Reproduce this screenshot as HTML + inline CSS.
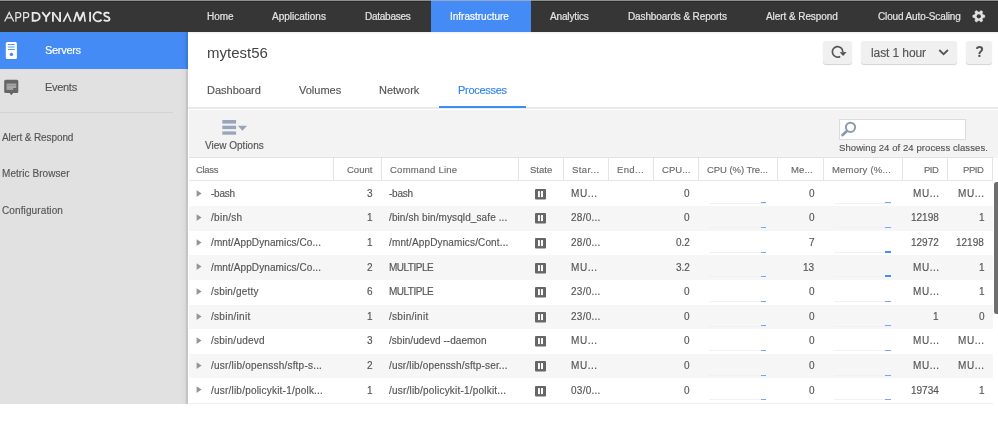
<!DOCTYPE html>
<html><head><meta charset="utf-8">
<style>
*{box-sizing:border-box;margin:0;padding:0}
html,body{width:998px;height:433px;overflow:hidden;background:#fff;font-family:"Liberation Sans",sans-serif;position:relative}
.a{position:absolute;white-space:nowrap;line-height:1;will-change:transform;-webkit-text-stroke:0.15px currentColor}
.b{position:absolute}
.nav{top:12px;font-size:10px;color:#e3e3e3;-webkit-text-stroke:0.2px currentColor}
.sl{font-size:10px;color:#555}
.tab{top:84.6px;font-size:11px;color:#555}
.hd{font-size:10px;color:#666;top:166px}
.cell{font-size:10px;color:#4a4a4a}
.r{text-align:right}
.vl{position:absolute;top:157.5px;width:1px;height:22.8px;background:#e4e4e4}
</style></head><body>

<div class="b" style="left:0;top:0;width:998px;height:32px;background:#363636"></div>
<div class="b" style="left:0;top:0;width:998px;height:1px;background:#8f8f8f"></div>
<div class="b" style="left:0;top:1px;width:998px;height:1px;background:#2a2a2a"></div>
<div class="b" style="left:188px;top:32px;width:810px;height:2px;background:linear-gradient(to bottom,rgba(0,0,0,0.07),rgba(0,0,0,0))"></div>
<div class="b" style="left:431px;top:1px;width:100px;height:31px;background:#448bf5"></div>
<div class="b" style="left:431px;top:0;width:100px;height:1px;background:#93a7c8"></div>
<svg class="b" style="left:0;top:0" width="120" height="32" fill="none" stroke="#e2e2e2"><g stroke-width="1.25" stroke-linejoin="miter"><path d="M4.6,21.5 L9.2,12.5 L13.7,21.5 M6.6,17.8 H11.9"/><path d="M15.9,21.7 V12.5 H18.2 A2.6,2.6 0 0 1 18.2,17.7 H15.9"/><path d="M23.7,21.7 V12.5 H26.1 A2.6,2.6 0 0 1 26.1,17.7 H23.7"/></g><g stroke-width="1.85" stroke="#e8e8e8"><path d="M32.65,12.85 H35.4 A4.3,3.95 0 0 1 35.4,20.75 H32.65 Z"/><path d="M42.2,12.2 L46.2,17.2 L50.2,12.2 M46.2,17.2 V21.75"/><path d="M52.95,21.75 V11.9 M60.05,21.75 V11.9" /><polygon points="52.0,11.9 53.9,11.9 61.0,21.75 59.1,21.75" fill="#e8e8e8" stroke="none"/><polygon points="62.5,21.75 67.6,11.8 71.9,21.75 70.1,21.75 67.6,15.6 64.4,21.75" fill="#e8e8e8" stroke="none"/><polygon points="73.0,21.75 76.0,11.8 77.6,11.8 79.9,18.0 82.6,11.8 84.4,11.8 86.0,21.75 84.3,21.75 83.5,15.0 80.8,21.3 79.0,21.3 76.9,15.0 74.8,21.75" fill="#e8e8e8" stroke="none"/><path d="M90.1,11.9 V21.75"/><path d="M101.6,13.9 A4.6,4.6 0 1 0 101.6,19.7"/><path d="M109.2,13.6 C108.2,12.3 104.1,12.2 104.1,14.6 C104.1,17.0 109.5,16.2 109.5,18.9 C109.5,21.4 105.1,21.3 103.8,19.8"/></g></svg>
<div class="a nav" style="left:206.5px;color:#e3e3e3;letter-spacing:0px">Home</div>
<div class="a nav" style="left:272px;color:#e3e3e3;letter-spacing:0px">Applications</div>
<div class="a nav" style="left:365.4px;color:#e3e3e3;letter-spacing:-0.25px">Databases</div>
<div class="a nav" style="left:450.4px;color:#fff;letter-spacing:0px">Infrastructure</div>
<div class="a nav" style="left:550px;color:#e3e3e3;letter-spacing:-0.15px">Analytics</div>
<div class="a nav" style="left:628px;color:#e3e3e3;letter-spacing:-0.12px">Dashboards &amp; Reports</div>
<div class="a nav" style="left:766px;color:#e3e3e3;letter-spacing:-0.07px">Alert &amp; Respond</div>
<div class="a nav" style="left:877.6px;color:#e3e3e3;letter-spacing:-0.13px">Cloud Auto-Scaling</div>
<svg class="b" style="left:966px;top:4px" width="26" height="26"><polygon points="18.82,11.35 18.82,13.25 16.73,14.05 16.28,14.83 16.64,17.04 14.99,17.99 13.25,16.58 12.35,16.58 10.61,17.99 8.96,17.04 9.32,14.83 8.87,14.05 6.78,13.25 6.78,11.35 8.87,10.55 9.32,9.77 8.96,7.56 10.61,6.61 12.35,8.02 13.25,8.02 14.99,6.61 16.64,7.56 16.28,9.77 16.73,10.55" fill="#e0e0e0" stroke="#e0e0e0" stroke-width="0.5" stroke-linejoin="round"/><circle cx="12.799999999999955" cy="12.3" r="2.1" fill="#363636"/></svg>
<div class="b" style="left:0;top:32px;width:188px;height:372px;background:#e1e1e1"></div>
<div class="b" style="left:0;top:32px;width:188px;height:36.5px;background:#448bf5"></div>
<div class="b" style="left:180px;top:32px;width:8px;height:372px;background:linear-gradient(to right,rgba(0,0,0,0) 0%,rgba(0,0,0,0.025) 60%,rgba(0,0,0,0.06) 72%,rgba(0,0,0,0.12) 77%,rgba(0,0,0,0.13) 97%,rgba(0,0,0,0) 100%)"></div>
<svg class="b" style="left:0;top:38px" width="24" height="24"><rect x="5.8" y="3.9" width="11.1" height="17.2" rx="1.6" fill="#fff"/><rect x="8" y="6" width="6.7" height="0.9" fill="#448bf5"/><rect x="8" y="8.2" width="6.7" height="1.5" fill="#448bf5" opacity="0.6"/><rect x="8" y="11" width="6.7" height="0.9" fill="#448bf5"/><circle cx="11.4" cy="16.4" r="1.7" fill="#448bf5"/></svg>
<div class="a" style="left:45px;top:45px;font-size:11px;color:#fff;letter-spacing:-0.3px">Servers</div>
<svg class="b" style="left:0;top:74px" width="24" height="24"><rect x="4.2" y="5.7" width="14.1" height="13.2" rx="1.5" fill="#666"/><polygon points="9.3,18.8 13.3,18.8 11.3,21.3" fill="#666"/><rect x="6.6" y="9.6" width="9.6" height="4.5" fill="#a8a8a8"/><rect x="6.6" y="11.2" width="9.6" height="0.7" fill="#8a8a8a"/><rect x="13.2" y="14.1" width="3" height="1.8" fill="#666"/><rect x="6.6" y="14.1" width="6.6" height="1.8" fill="#a8a8a8"/></svg>
<div class="a" style="left:45px;top:81.5px;font-size:11px;color:#555;letter-spacing:-0.3px">Events</div>
<div class="b" style="left:0;top:112px;width:173px;height:1px;background:#d3d3d3"></div>
<div class="a" style="left:1.8px;top:133.00px;font-size:10px;color:#555;letter-spacing:-0.100px">Alert &amp; Respond</div>
<div class="a" style="left:2px;top:169.00px;font-size:10px;color:#555;letter-spacing:0.062px">Metric Browser</div>
<div class="a" style="left:2px;top:206.00px;font-size:10px;color:#555;letter-spacing:0.117px">Configuration</div>
<div class="a" style="left:206.5px;top:45px;font-size:15px;color:#444;-webkit-text-stroke:0">mytest56</div>
<div class="b" style="left:823.4px;top:40.5px;width:29.100000000000023px;height:23.5px;background:#f0f0f0;border-radius:3px;box-shadow:0 1px 1px rgba(0,0,0,0.18)"></div>
<div class="b" style="left:861.2px;top:40.5px;width:96.0px;height:23.5px;background:#f0f0f0;border-radius:3px;box-shadow:0 1px 1px rgba(0,0,0,0.18)"></div>
<div class="b" style="left:966px;top:40.5px;width:26px;height:23.5px;background:#f0f0f0;border-radius:3px;box-shadow:0 1px 1px rgba(0,0,0,0.18)"></div>
<svg class="b" style="left:822px;top:38px" width="34" height="30"><path d="M 18.2 18.4 A 5.25 5.25 0 1 1 20.83 14.0" fill="none" stroke="#555" stroke-width="1.7"/><polygon points="17.6,14.3 24.6,13.9 21.1,17.9" fill="#555"/></svg>
<div class="a" style="left:870.6px;top:47px;font-size:12px;color:#555;letter-spacing:-0.1px">last 1 hour</div>
<svg class="b" style="left:936px;top:47px" width="16" height="10"><polyline points="3.3,3.0 7.6,7.2 11.9,3.0" fill="none" stroke="#555" stroke-width="1.8"/></svg>
<svg class="b" style="left:970px;top:41.4px" width="20" height="20"><path d="M6.9,7.9 C7.1,5.6 12.1,5.2 12.1,8.3 C12.1,10.6 9.4,10.5 9.4,12.9" fill="none" stroke="#555" stroke-width="2"/><rect x="8.35" y="13.8" width="2.1" height="2.1" fill="#555"/></svg>
<div class="a tab" style="left:206.5px">Dashboard</div>
<div class="a tab" style="left:298.5px">Volumes</div>
<div class="a tab" style="left:378.5px">Network</div>
<div class="a tab" style="left:458.3px;color:#2f80f0;letter-spacing:-0.3px">Processes</div>
<div class="b" style="left:188px;top:107px;width:810px;height:1.5px;background:#eaeaea"></div>
<div class="b" style="left:439px;top:106px;width:87px;height:2px;background:#3890f7"></div>
<div class="b" style="left:189px;top:109.5px;width:809px;height:48px;background:#f3f3f3"></div>
<svg class="b" style="left:216px;top:114px" width="36" height="26"><rect x="6.3" y="6" width="13.8" height="3.6" fill="#9aa5ba"/><rect x="6.3" y="11.7" width="13.8" height="3.4" fill="#9aa5ba"/><rect x="6.3" y="17.4" width="13.8" height="3.3" fill="#9aa5ba"/><polygon points="21.9,11.7 31.1,11.7 26.4,16.8" fill="#9aa5ba"/></svg>
<div class="a" style="left:205px;top:141px;font-size:10px;color:#555">View Options</div>
<div class="b" style="left:838.7px;top:119.2px;width:127.2px;height:20.4px;background:#fff;border:1px solid #dcdcdc"></div>
<svg class="b" style="left:836px;top:118px" width="24" height="22"><circle cx="14.5" cy="9.3" r="4.6" fill="none" stroke="#8e9ab0" stroke-width="2"/><line x1="10.4" y1="13.4" x2="6.6" y2="17.1" stroke="#8e9ab0" stroke-width="2.8" stroke-linecap="round"/></svg>
<div class="a" style="left:838.9px;top:142.80px;font-size:9.5px;color:#555;letter-spacing:0.081px">Showing 24 of 24 process classes.</div>
<div class="b" style="left:189px;top:157px;width:804px;height:1px;background:#e3e3e3"></div>
<div class="b" style="left:189px;top:180.1px;width:804px;height:1.2px;background:#e6e6e6"></div>
<div class="vl" style="left:333.0px"></div>
<div class="vl" style="left:381.0px"></div>
<div class="vl" style="left:517.5px"></div>
<div class="vl" style="left:563.0px"></div>
<div class="vl" style="left:608.0px"></div>
<div class="vl" style="left:653.0px"></div>
<div class="vl" style="left:698.0px"></div>
<div class="vl" style="left:777.0px"></div>
<div class="vl" style="left:822.5px"></div>
<div class="vl" style="left:902.0px"></div>
<div class="vl" style="left:947.0px"></div>
<div class="vl" style="left:992.0px"></div>
<div class="a" style="left:196.4px;top:165.30px;font-size:9.5px;color:#6a6a6a;letter-spacing:-0.325px">Class</div>
<div class="a" style="right:625.40px;top:165.30px;font-size:9.5px;color:#6a6a6a;letter-spacing:0.000px">Count</div>
<div class="a" style="left:390px;top:165.30px;font-size:9.5px;color:#6a6a6a;letter-spacing:0.245px">Command Line</div>
<div class="a" style="left:529.5px;top:165.30px;font-size:9.5px;color:#6a6a6a;letter-spacing:0.000px">State</div>
<div class="a" style="left:571.5px;top:165.30px;font-size:9.5px;color:#6a6a6a;letter-spacing:0.383px">Star...</div>
<div class="a" style="left:616.6px;top:165.30px;font-size:9.5px;color:#6a6a6a;letter-spacing:0.340px">End...</div>
<div class="a" style="left:662px;top:165.30px;font-size:9.5px;color:#6a6a6a;letter-spacing:0.080px">CPU...</div>
<div class="a" style="left:707.1px;top:165.30px;font-size:9.5px;color:#6a6a6a;letter-spacing:-0.069px">CPU (%) Tre...</div>
<div class="a" style="right:184.90px;top:165.30px;font-size:9.5px;color:#6a6a6a;letter-spacing:0.100px">Me...</div>
<div class="a" style="left:831.7px;top:165.30px;font-size:9.5px;color:#6a6a6a;letter-spacing:0.209px">Memory (%...</div>
<div class="a" style="right:59.50px;top:165.30px;font-size:9.5px;color:#6a6a6a;letter-spacing:-0.500px">PID</div>
<div class="a" style="right:14.10px;top:165.30px;font-size:9.5px;color:#6a6a6a;letter-spacing:-0.400px">PPID</div>
<svg class="b" style="left:196px;top:189.50px" width="7" height="8"><polygon points="0.6,0.3 5.6,3.6 0.6,6.9" fill="#959595"/></svg>
<div class="a" style="left:211.4px;top:188.80px;font-size:10px;color:#555;letter-spacing:-0.250px">-bash</div>
<div class="a" style="right:625.40px;top:188.80px;font-size:10px;color:#555;letter-spacing:0.000px">3</div>
<div class="a" style="left:389.2px;top:188.80px;font-size:10px;color:#555;letter-spacing:-0.250px">-bash</div>
<svg class="b" style="left:534.9px;top:188.80px" width="11.5" height="11"><rect x="0" y="0" width="11.1" height="10.4" rx="1" fill="#666"/><rect x="3.0" y="2.1" width="1.9" height="6" fill="#fff"/><rect x="6.0" y="2.1" width="2.0" height="6" fill="#fff"/></svg>
<div class="a" style="left:570.5px;top:188.80px;font-size:10px;color:#555;letter-spacing:0.550px">MU...</div>
<div class="a" style="right:308.00px;top:188.80px;font-size:10px;color:#555;letter-spacing:0.000px">0</div>
<div class="a" style="right:183.40px;top:188.80px;font-size:10px;color:#555;letter-spacing:0.000px">0</div>
<div class="a" style="right:58.65px;top:188.80px;font-size:10px;color:#555;letter-spacing:0.550px">MU...</div>
<div class="a" style="right:13.25px;top:188.80px;font-size:10px;color:#555;letter-spacing:0.550px">MU...</div>
<div class="b" style="left:709px;top:202.50px;width:57px;height:1px;background:#eef1f6"></div>
<div class="b" style="left:760.8px;top:202.40px;width:5.2px;height:1.1px;background:#77a6f2"></div>
<div class="b" style="left:834px;top:202.50px;width:56.799999999999955px;height:1px;background:#eef1f6"></div>
<div class="b" style="left:885.3px;top:202.40px;width:5.5px;height:1.1px;background:#77a6f2"></div>
<div class="b" style="left:189px;top:206.10px;width:804px;height:24.6px;background:#f6f6f6"></div>
<svg class="b" style="left:196px;top:214.10px" width="7" height="8"><polygon points="0.6,0.3 5.6,3.6 0.6,6.9" fill="#959595"/></svg>
<div class="a" style="left:211.4px;top:213.40px;font-size:10px;color:#555;letter-spacing:0.283px">/bin/sh</div>
<div class="a" style="right:625.40px;top:213.40px;font-size:10px;color:#555;letter-spacing:0.000px">1</div>
<div class="a" style="left:389.2px;top:213.40px;font-size:10px;color:#555;letter-spacing:0.100px">/bin/sh bin/mysqld_safe ...</div>
<svg class="b" style="left:534.9px;top:213.40px" width="11.5" height="11"><rect x="0" y="0" width="11.1" height="10.4" rx="1" fill="#666"/><rect x="3.0" y="2.1" width="1.9" height="6" fill="#fff"/><rect x="6.0" y="2.1" width="2.0" height="6" fill="#fff"/></svg>
<div class="a" style="left:570.5px;top:213.40px;font-size:10px;color:#555;letter-spacing:0.267px">28/0...</div>
<div class="a" style="right:308.00px;top:213.40px;font-size:10px;color:#555;letter-spacing:0.000px">0</div>
<div class="a" style="right:183.40px;top:213.40px;font-size:10px;color:#555;letter-spacing:0.000px">0</div>
<div class="a" style="right:59.20px;top:213.40px;font-size:10px;color:#555;letter-spacing:0.000px">12198</div>
<div class="a" style="right:13.80px;top:213.40px;font-size:10px;color:#555;letter-spacing:0.000px">1</div>
<div class="b" style="left:709px;top:227.10px;width:57px;height:1px;background:#eef1f6"></div>
<div class="b" style="left:760.8px;top:227.00px;width:5.2px;height:1.1px;background:#77a6f2"></div>
<div class="b" style="left:834px;top:227.10px;width:56.799999999999955px;height:1px;background:#eef1f6"></div>
<div class="b" style="left:885.3px;top:227.00px;width:5.5px;height:1.1px;background:#77a6f2"></div>
<svg class="b" style="left:196px;top:238.70px" width="7" height="8"><polygon points="0.6,0.3 5.6,3.6 0.6,6.9" fill="#959595"/></svg>
<div class="a" style="left:211.4px;top:238.00px;font-size:10px;color:#555;letter-spacing:0.105px">/mnt/AppDynamics/Co...</div>
<div class="a" style="right:625.40px;top:238.00px;font-size:10px;color:#555;letter-spacing:0.000px">1</div>
<div class="a" style="left:389.2px;top:238.00px;font-size:10px;color:#555;letter-spacing:0.139px">/mnt/AppDynamics/Cont...</div>
<svg class="b" style="left:534.9px;top:238.00px" width="11.5" height="11"><rect x="0" y="0" width="11.1" height="10.4" rx="1" fill="#666"/><rect x="3.0" y="2.1" width="1.9" height="6" fill="#fff"/><rect x="6.0" y="2.1" width="2.0" height="6" fill="#fff"/></svg>
<div class="a" style="left:570.5px;top:238.00px;font-size:10px;color:#555;letter-spacing:0.267px">28/0...</div>
<div class="a" style="right:308.00px;top:238.00px;font-size:10px;color:#555;letter-spacing:0.000px">0.2</div>
<div class="a" style="right:183.40px;top:238.00px;font-size:10px;color:#555;letter-spacing:0.000px">7</div>
<div class="a" style="right:59.20px;top:238.00px;font-size:10px;color:#555;letter-spacing:0.000px">12972</div>
<div class="a" style="right:13.80px;top:238.00px;font-size:10px;color:#555;letter-spacing:0.000px">12198</div>
<div class="b" style="left:709px;top:251.70px;width:57px;height:1px;background:#eef1f6"></div>
<div class="b" style="left:760.8px;top:251.60px;width:5.2px;height:1.1px;background:#77a6f2"></div>
<div class="b" style="left:834px;top:251.70px;width:56.799999999999955px;height:1px;background:#eef1f6"></div>
<div class="b" style="left:885.3px;top:250.70px;width:5.5px;height:2.0px;background:#4a8df0"></div>
<div class="b" style="left:189px;top:255.30px;width:804px;height:24.6px;background:#f6f6f6"></div>
<svg class="b" style="left:196px;top:263.30px" width="7" height="8"><polygon points="0.6,0.3 5.6,3.6 0.6,6.9" fill="#959595"/></svg>
<div class="a" style="left:211.4px;top:262.60px;font-size:10px;color:#555;letter-spacing:0.105px">/mnt/AppDynamics/Co...</div>
<div class="a" style="right:625.40px;top:262.60px;font-size:10px;color:#555;letter-spacing:0.000px">2</div>
<div class="a" style="left:389.2px;top:262.60px;font-size:10px;color:#555;letter-spacing:-0.500px">MULTIPLE</div>
<svg class="b" style="left:534.9px;top:262.60px" width="11.5" height="11"><rect x="0" y="0" width="11.1" height="10.4" rx="1" fill="#666"/><rect x="3.0" y="2.1" width="1.9" height="6" fill="#fff"/><rect x="6.0" y="2.1" width="2.0" height="6" fill="#fff"/></svg>
<div class="a" style="left:570.5px;top:262.60px;font-size:10px;color:#555;letter-spacing:0.550px">MU...</div>
<div class="a" style="right:308.00px;top:262.60px;font-size:10px;color:#555;letter-spacing:0.000px">3.2</div>
<div class="a" style="right:183.40px;top:262.60px;font-size:10px;color:#555;letter-spacing:0.000px">13</div>
<div class="a" style="right:58.65px;top:262.60px;font-size:10px;color:#555;letter-spacing:0.550px">MU...</div>
<div class="a" style="right:13.80px;top:262.60px;font-size:10px;color:#555;letter-spacing:0.000px">1</div>
<div class="b" style="left:709px;top:276.30px;width:57px;height:1px;background:#eef1f6"></div>
<div class="b" style="left:760.8px;top:276.20px;width:5.2px;height:1.1px;background:#77a6f2"></div>
<div class="b" style="left:834px;top:276.30px;width:56.799999999999955px;height:1px;background:#eef1f6"></div>
<div class="b" style="left:885.3px;top:274.50px;width:5.5px;height:2.8px;background:#4a8df0"></div>
<svg class="b" style="left:196px;top:287.90px" width="7" height="8"><polygon points="0.6,0.3 5.6,3.6 0.6,6.9" fill="#959595"/></svg>
<div class="a" style="left:211.4px;top:287.20px;font-size:10px;color:#555;letter-spacing:0.190px">/sbin/getty</div>
<div class="a" style="right:625.40px;top:287.20px;font-size:10px;color:#555;letter-spacing:0.000px">6</div>
<div class="a" style="left:389.2px;top:287.20px;font-size:10px;color:#555;letter-spacing:-0.500px">MULTIPLE</div>
<svg class="b" style="left:534.9px;top:287.20px" width="11.5" height="11"><rect x="0" y="0" width="11.1" height="10.4" rx="1" fill="#666"/><rect x="3.0" y="2.1" width="1.9" height="6" fill="#fff"/><rect x="6.0" y="2.1" width="2.0" height="6" fill="#fff"/></svg>
<div class="a" style="left:570.5px;top:287.20px;font-size:10px;color:#555;letter-spacing:0.267px">23/0...</div>
<div class="a" style="right:308.00px;top:287.20px;font-size:10px;color:#555;letter-spacing:0.000px">0</div>
<div class="a" style="right:183.40px;top:287.20px;font-size:10px;color:#555;letter-spacing:0.000px">0</div>
<div class="a" style="right:58.65px;top:287.20px;font-size:10px;color:#555;letter-spacing:0.550px">MU...</div>
<div class="a" style="right:13.80px;top:287.20px;font-size:10px;color:#555;letter-spacing:0.000px">1</div>
<div class="b" style="left:709px;top:300.90px;width:57px;height:1px;background:#eef1f6"></div>
<div class="b" style="left:760.8px;top:300.80px;width:5.2px;height:1.1px;background:#77a6f2"></div>
<div class="b" style="left:834px;top:300.90px;width:56.799999999999955px;height:1px;background:#eef1f6"></div>
<div class="b" style="left:885.3px;top:300.80px;width:5.5px;height:1.1px;background:#77a6f2"></div>
<div class="b" style="left:189px;top:304.50px;width:804px;height:24.6px;background:#f6f6f6"></div>
<svg class="b" style="left:196px;top:312.50px" width="7" height="8"><polygon points="0.6,0.3 5.6,3.6 0.6,6.9" fill="#959595"/></svg>
<div class="a" style="left:211.4px;top:311.80px;font-size:10px;color:#555;letter-spacing:0.278px">/sbin/init</div>
<div class="a" style="right:625.40px;top:311.80px;font-size:10px;color:#555;letter-spacing:0.000px">1</div>
<div class="a" style="left:389.2px;top:311.80px;font-size:10px;color:#555;letter-spacing:0.278px">/sbin/init</div>
<svg class="b" style="left:534.9px;top:311.80px" width="11.5" height="11"><rect x="0" y="0" width="11.1" height="10.4" rx="1" fill="#666"/><rect x="3.0" y="2.1" width="1.9" height="6" fill="#fff"/><rect x="6.0" y="2.1" width="2.0" height="6" fill="#fff"/></svg>
<div class="a" style="left:570.5px;top:311.80px;font-size:10px;color:#555;letter-spacing:0.267px">23/0...</div>
<div class="a" style="right:308.00px;top:311.80px;font-size:10px;color:#555;letter-spacing:0.000px">0</div>
<div class="a" style="right:183.40px;top:311.80px;font-size:10px;color:#555;letter-spacing:0.000px">0</div>
<div class="a" style="right:59.20px;top:311.80px;font-size:10px;color:#555;letter-spacing:0.000px">1</div>
<div class="a" style="right:13.80px;top:311.80px;font-size:10px;color:#555;letter-spacing:0.000px">0</div>
<div class="b" style="left:709px;top:325.50px;width:57px;height:1px;background:#eef1f6"></div>
<div class="b" style="left:760.8px;top:325.40px;width:5.2px;height:1.1px;background:#77a6f2"></div>
<div class="b" style="left:834px;top:325.50px;width:56.799999999999955px;height:1px;background:#eef1f6"></div>
<div class="b" style="left:885.3px;top:325.40px;width:5.5px;height:1.1px;background:#77a6f2"></div>
<svg class="b" style="left:196px;top:337.10px" width="7" height="8"><polygon points="0.6,0.3 5.6,3.6 0.6,6.9" fill="#959595"/></svg>
<div class="a" style="left:211.4px;top:336.40px;font-size:10px;color:#555;letter-spacing:0.250px">/sbin/udevd</div>
<div class="a" style="right:625.40px;top:336.40px;font-size:10px;color:#555;letter-spacing:0.000px">3</div>
<div class="a" style="left:389.2px;top:336.40px;font-size:10px;color:#555;letter-spacing:0.042px">/sbin/udevd --daemon</div>
<svg class="b" style="left:534.9px;top:336.40px" width="11.5" height="11"><rect x="0" y="0" width="11.1" height="10.4" rx="1" fill="#666"/><rect x="3.0" y="2.1" width="1.9" height="6" fill="#fff"/><rect x="6.0" y="2.1" width="2.0" height="6" fill="#fff"/></svg>
<div class="a" style="left:570.5px;top:336.40px;font-size:10px;color:#555;letter-spacing:0.550px">MU...</div>
<div class="a" style="right:308.00px;top:336.40px;font-size:10px;color:#555;letter-spacing:0.000px">0</div>
<div class="a" style="right:183.40px;top:336.40px;font-size:10px;color:#555;letter-spacing:0.000px">0</div>
<div class="a" style="right:58.65px;top:336.40px;font-size:10px;color:#555;letter-spacing:0.550px">MU...</div>
<div class="a" style="right:13.25px;top:336.40px;font-size:10px;color:#555;letter-spacing:0.550px">MU...</div>
<div class="b" style="left:709px;top:350.10px;width:57px;height:1px;background:#eef1f6"></div>
<div class="b" style="left:760.8px;top:350.00px;width:5.2px;height:1.1px;background:#77a6f2"></div>
<div class="b" style="left:834px;top:350.10px;width:56.799999999999955px;height:1px;background:#eef1f6"></div>
<div class="b" style="left:885.3px;top:350.00px;width:5.5px;height:1.1px;background:#77a6f2"></div>
<div class="b" style="left:189px;top:353.70px;width:804px;height:24.6px;background:#f6f6f6"></div>
<svg class="b" style="left:196px;top:361.70px" width="7" height="8"><polygon points="0.6,0.3 5.6,3.6 0.6,6.9" fill="#959595"/></svg>
<div class="a" style="left:211.4px;top:361.00px;font-size:10px;color:#555;letter-spacing:0.212px">/usr/lib/openssh/sftp-s...</div>
<div class="a" style="right:625.40px;top:361.00px;font-size:10px;color:#555;letter-spacing:0.000px">2</div>
<div class="a" style="left:389.2px;top:361.00px;font-size:10px;color:#555;letter-spacing:0.170px">/usr/lib/openssh/sftp-ser...</div>
<svg class="b" style="left:534.9px;top:361.00px" width="11.5" height="11"><rect x="0" y="0" width="11.1" height="10.4" rx="1" fill="#666"/><rect x="3.0" y="2.1" width="1.9" height="6" fill="#fff"/><rect x="6.0" y="2.1" width="2.0" height="6" fill="#fff"/></svg>
<div class="a" style="left:570.5px;top:361.00px;font-size:10px;color:#555;letter-spacing:0.550px">MU...</div>
<div class="a" style="right:308.00px;top:361.00px;font-size:10px;color:#555;letter-spacing:0.000px">0</div>
<div class="a" style="right:183.40px;top:361.00px;font-size:10px;color:#555;letter-spacing:0.000px">0</div>
<div class="a" style="right:58.65px;top:361.00px;font-size:10px;color:#555;letter-spacing:0.550px">MU...</div>
<div class="a" style="right:13.25px;top:361.00px;font-size:10px;color:#555;letter-spacing:0.550px">MU...</div>
<div class="b" style="left:709px;top:374.70px;width:57px;height:1px;background:#eef1f6"></div>
<div class="b" style="left:760.8px;top:374.60px;width:5.2px;height:1.1px;background:#77a6f2"></div>
<div class="b" style="left:834px;top:374.70px;width:56.799999999999955px;height:1px;background:#eef1f6"></div>
<div class="b" style="left:885.3px;top:374.60px;width:5.5px;height:1.1px;background:#77a6f2"></div>
<svg class="b" style="left:196px;top:386.30px" width="7" height="8"><polygon points="0.6,0.3 5.6,3.6 0.6,6.9" fill="#959595"/></svg>
<div class="a" style="left:211.4px;top:385.60px;font-size:10px;color:#555;letter-spacing:0.211px">/usr/lib/policykit-1/polk...</div>
<div class="a" style="right:625.40px;top:385.60px;font-size:10px;color:#555;letter-spacing:0.000px">1</div>
<div class="a" style="left:389.2px;top:385.60px;font-size:10px;color:#555;letter-spacing:0.203px">/usr/lib/policykit-1/polkit...</div>
<svg class="b" style="left:534.9px;top:385.60px" width="11.5" height="11"><rect x="0" y="0" width="11.1" height="10.4" rx="1" fill="#666"/><rect x="3.0" y="2.1" width="1.9" height="6" fill="#fff"/><rect x="6.0" y="2.1" width="2.0" height="6" fill="#fff"/></svg>
<div class="a" style="left:570.5px;top:385.60px;font-size:10px;color:#555;letter-spacing:0.267px">03/0...</div>
<div class="a" style="right:308.00px;top:385.60px;font-size:10px;color:#555;letter-spacing:0.000px">0</div>
<div class="a" style="right:183.40px;top:385.60px;font-size:10px;color:#555;letter-spacing:0.000px">0</div>
<div class="a" style="right:59.20px;top:385.60px;font-size:10px;color:#555;letter-spacing:0.000px">19734</div>
<div class="a" style="right:13.80px;top:385.60px;font-size:10px;color:#555;letter-spacing:0.000px">1</div>
<div class="b" style="left:709px;top:399.30px;width:57px;height:1px;background:#eef1f6"></div>
<div class="b" style="left:760.8px;top:399.20px;width:5.2px;height:1.1px;background:#77a6f2"></div>
<div class="b" style="left:834px;top:399.30px;width:56.799999999999955px;height:1px;background:#eef1f6"></div>
<div class="b" style="left:885.3px;top:399.20px;width:5.5px;height:1.1px;background:#77a6f2"></div>
<div class="b" style="left:189px;top:402.6px;width:804px;height:1.8px;background:#efefef"></div>
<div class="b" style="left:994px;top:181.5px;width:6px;height:132px;background:#6e6e6e;border-radius:2.5px"></div>
</body></html>
